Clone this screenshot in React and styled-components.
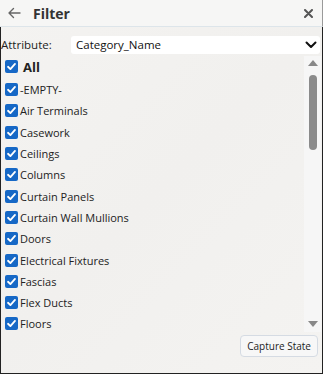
import React from "react";
import styled, { createGlobalStyle } from "styled-components";

const Global = createGlobalStyle`
  html, body { margin: 0; padding: 0; background: #f3f2f0; }
  * { box-sizing: border-box; }
`;

const Panel = styled.div`
  width: 323px;
  height: 374px;
  display: flex;
  flex-direction: column;
  font-family: "Open Sans", "Noto Sans", sans-serif;
  color: #222;
  background: linear-gradient(135deg, #f4f3f1 0%, #f1f0ee 50%, #f4f3f1 100%);
  overflow: hidden;
`;

const Header = styled.div`
  height: 27px;
  flex: none;
  display: flex;
  align-items: center;
  padding: 0 9px 0 7px;
  background: #f6f6f5;
  border-bottom: 1px solid #dde5ea;
  border-right: 1px solid #9a9a9a;
`;

const Title = styled.div`
  font-weight: 700;
  font-size: 14px;
  color: #333;
  margin-left: 12px;
  flex: 1;
`;

const IconBtn = styled.span`
  display: flex;
  align-items: center;
  color: ${(p) => p.$color || "#666"};
`;

const Body = styled.div`
  flex: 1;
  display: flex;
  flex-direction: column;
  border-left: 1px solid #222;
  border-right: 1px solid #222;
  border-bottom: 1px solid #222;
  min-height: 0;
`;

const AttrRow = styled.div`
  display: flex;
  align-items: center;
  height: 19px;
  margin-top: 8px;
  padding-right: 2px;
`;

const AttrLabel = styled.span`
  font-size: 11.5px;
  width: 70px;
  color: #222;
`;

const Select = styled.div`
  flex: 1;
  height: 18px;
  background: #fff;
  border-radius: 3px;
  display: flex;
  align-items: center;
  justify-content: space-between;
  padding: 0 3px 0 5px;
  font-size: 11.5px;
  color: #111;
`;

const ListWrap = styled.div`
  display: flex;
  height: 278px;
  flex: none;
`;

const List = styled.div`
  flex: 1;
  overflow: hidden;
  padding-left: 4px;
`;

const Row = styled.label`
  display: flex;
  align-items: center;
  height: ${(p) => (p.$all ? "25px" : "21.3px")};
  font-size: ${(p) => (p.$all ? "13px" : "11px")};
  font-weight: ${(p) => (p.$all ? 700 : 400)};
  gap: ${(p) => (p.$all ? "5px" : "2px")};
  color: #222;
  white-space: nowrap;
`;

const Box = styled.span`
  width: 13px;
  height: 13px;
  border-radius: 2px;
  background: #1668c6;
  display: flex;
  align-items: center;
  justify-content: center;
  flex: none;
`;

const ScrollCol = styled.div`
  width: 17px;
  margin-right: 1px;
  margin-top: 2px;
  display: flex;
  flex-direction: column;
  align-items: center;
  background: #f6f6f6;
`;

const Arrow = styled.div`
  width: 0;
  height: 0;
  border-left: 5px solid transparent;
  border-right: 5px solid transparent;
  ${(p) =>
    p.$down
      ? "border-top: 6px solid #888;"
      : "border-bottom: 6px solid #888;"}
  margin: ${(p) => (p.$down ? "0 0 5px" : "4px 0 0")};
`;

const Thumb = styled.div`
  width: 8px;
  height: 75px;
  border-radius: 4px;
  background: #8b8b8b;
  margin-top: 9px;
`;

const Spacer = styled.div`
  flex: 1;
`;

const Footer = styled.div`
  display: flex;
  justify-content: flex-end;
  padding: 3px 4px 0 0;
`;

const Button = styled.button`
  height: 22px;
  padding: 0 6px;
  border: 1px solid #d5dbe3;
  border-radius: 4px;
  background: #f7f7f7;
  font-family: "Open Sans", "Noto Sans", sans-serif;
  font-size: 10px;
  color: #222;
`;

const Check = () => (
  <svg width="11" height="11" viewBox="0 0 12 12">
    <path d="M2.2 6.3 L4.8 8.8 L9.8 3.2" fill="none" stroke="#fff" strokeWidth="2" strokeLinecap="round" strokeLinejoin="round" />
  </svg>
);

const items = [
  "-EMPTY-",
  "Air Terminals",
  "Casework",
  "Ceilings",
  "Columns",
  "Curtain Panels",
  "Curtain Wall Mullions",
  "Doors",
  "Electrical Fixtures",
  "Fascias",
  "Flex Ducts",
  "Floors",
];

export default function App() {
  return (
    <>
      <Global />
      <Panel>
        <Header>
          <IconBtn $color="#666">
            <svg width="14" height="12" viewBox="0 0 14 12">
              <path d="M13 6 H2 M6.5 1.5 L2 6 L6.5 10.5" fill="none" stroke="#666" strokeWidth="1.4" strokeLinecap="round" strokeLinejoin="round" />
            </svg>
          </IconBtn>
          <Title>Filter</Title>
          <IconBtn $color="#555">
            <svg width="9" height="9" viewBox="0 0 9 9">
              <path d="M1 1 L8 8 M8 1 L1 8" stroke="#555" strokeWidth="2" strokeLinecap="round" />
            </svg>
          </IconBtn>
        </Header>
        <Body>
          <AttrRow>
            <AttrLabel>Attribute:</AttrLabel>
            <Select>
              <span>Category_Name</span>
              <svg width="12" height="8" viewBox="0 0 12 8">
                <path d="M1.5 1.5 L6 6 L10.5 1.5" fill="none" stroke="#111" strokeWidth="2" strokeLinecap="round" strokeLinejoin="round" />
              </svg>
            </Select>
          </AttrRow>
          <ListWrap>
            <List>
              <Row $all>
                <Box><Check /></Box>
                All
              </Row>
              {items.map((t) => (
                <Row key={t}>
                  <Box><Check /></Box>
                  {t}
                </Row>
              ))}
            </List>
            <ScrollCol>
              <Arrow />
              <Thumb />
              <Spacer />
              <Arrow $down />
            </ScrollCol>
          </ListWrap>
          <Footer>
            <Button>Capture State</Button>
          </Footer>
        </Body>
      </Panel>
    </>
  );
}
